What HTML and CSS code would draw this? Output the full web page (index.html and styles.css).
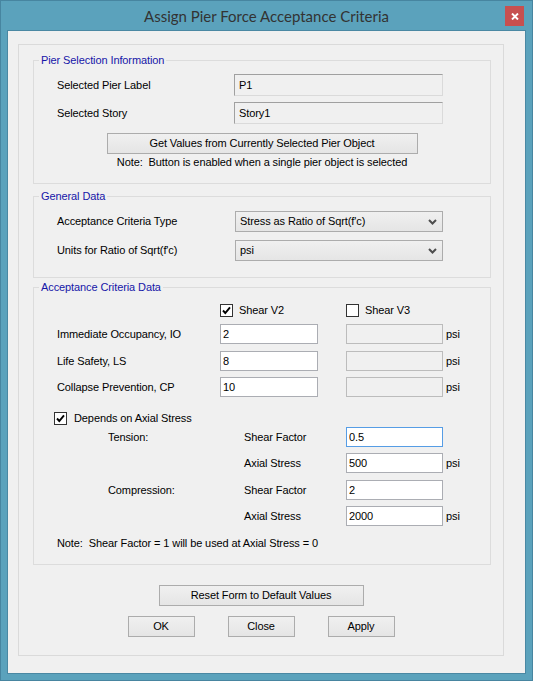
FILE: index.html
```html
<!DOCTYPE html>
<html>
<head>
<meta charset="utf-8">
<title>Assign Pier Force Acceptance Criteria</title>
<link rel="stylesheet" href="styles.css">
</head>
<body>
<div class="window">
  <div class="titlebar">
    <span class="tb-spacer"></span>
    <div class="title">Assign Pier Force Acceptance Criteria</div>
    <div class="close-wrap">
      <div class="close">
        <svg width="8" height="7" viewBox="0 0 8 7"><path d="M1 0.5 L7 6.5 M7 0.5 L1 6.5" stroke="#fff" stroke-width="1.9" fill="none"/></svg>
      </div>
    </div>
  </div>
  <div class="client">
    <div class="panel">

      <div class="group g1">
        <span class="caption">Pier Selection Information</span>
        <div class="row first">
          <span class="label w177">Selected Pier Label</span>
          <input class="tb ro" type="text" value="P1" readonly>
        </div>
        <div class="row second">
          <span class="label w177">Selected Story</span>
          <input class="tb ro" type="text" value="Story1" readonly>
        </div>
        <button class="btn getvals">Get Values from Currently Selected Pier Object</button>
        <div class="note-center">Note:&nbsp; Button is enabled when a single pier object is selected</div>
      </div>

      <div class="group g2">
        <span class="caption">General Data</span>
        <div class="row cb-first">
          <span class="label w178">Acceptance Criteria Type</span>
          <div class="combo"><span>Stress as Ratio of Sqrt(f'c)</span>
            <svg class="chev" width="9" height="6" viewBox="0 0 9 6"><path d="M1 1 L4.5 4.5 L8 1" stroke="#4d4d4d" stroke-width="2" fill="none"/></svg>
          </div>
        </div>
        <div class="row cb-second">
          <span class="label w178">Units for Ratio of Sqrt(f'c)</span>
          <div class="combo"><span>psi</span>
            <svg class="chev" width="9" height="6" viewBox="0 0 9 6"><path d="M1 1 L4.5 4.5 L8 1" stroke="#4d4d4d" stroke-width="2" fill="none"/></svg>
          </div>
        </div>
      </div>

      <div class="group g3">
        <span class="caption">Acceptance Criteria Data</span>
        <div class="shear-row">
          <label class="chk-item v2">
            <span class="chk"><svg width="11" height="11" viewBox="0 0 11 11"><path d="M2 5.5 L4.3 8 L9 2.3" stroke="#000" stroke-width="1.9" fill="none"/></svg></span>
            <span>Shear V2</span>
          </label>
          <label class="chk-item">
            <span class="chk"></span>
            <span>Shear V3</span>
          </label>
        </div>
        <div class="crit-row r-io">
          <span class="label w163">Immediate Occupancy, IO</span>
          <input class="tb w98" type="text" value="2">
          <input class="tb dis w97" type="text" value="" disabled>
          <span class="unit">psi</span>
        </div>
        <div class="crit-row r-ls">
          <span class="label w163">Life Safety, LS</span>
          <input class="tb w98" type="text" value="8">
          <input class="tb dis w97" type="text" value="" disabled>
          <span class="unit">psi</span>
        </div>
        <div class="crit-row r-cp">
          <span class="label w163">Collapse Prevention, CP</span>
          <input class="tb w98" type="text" value="10">
          <input class="tb dis w97" type="text" value="" disabled>
          <span class="unit">psi</span>
        </div>
        <label class="depends-row">
          <span class="chk"><svg width="11" height="11" viewBox="0 0 11 11"><path d="M2 5.5 L4.3 8 L9 2.3" stroke="#000" stroke-width="1.9" fill="none"/></svg></span>
          <span>Depends on Axial Stress</span>
        </label>
        <div class="axial-row ax1">
          <span class="label w136">Tension:</span>
          <span class="label w102">Shear Factor</span>
          <input class="tb w97 focus" type="text" value="0.5">
        </div>
        <div class="axial-row ax2">
          <span class="label w136"></span>
          <span class="label w102">Axial Stress</span>
          <input class="tb w97" type="text" value="500">
          <span class="unit">psi</span>
        </div>
        <div class="axial-row ax3">
          <span class="label w136">Compression:</span>
          <span class="label w102">Shear Factor</span>
          <input class="tb w97" type="text" value="2">
        </div>
        <div class="axial-row ax4">
          <span class="label w136"></span>
          <span class="label w102">Axial Stress</span>
          <input class="tb w97" type="text" value="2000">
          <span class="unit">psi</span>
        </div>
        <div class="note-left">Note:&nbsp; Shear Factor = 1 will be used at Axial Stress = 0</div>
      </div>

      <button class="btn reset">Reset Form to Default Values</button>
      <div class="action-row">
        <button class="btn act">OK</button>
        <button class="btn act">Close</button>
        <button class="btn act">Apply</button>
      </div>

    </div>
  </div>
</div>
</body>
</html>
```

FILE: styles.css
```css
html, body {
  margin: 0;
  padding: 0;
  background: #5ba2bc;
}

body {
  font-family: "Liberation Sans", Arial, sans-serif;
  font-size: 11px;
  line-height: 13px;
  letter-spacing: -0.1px;
  color: #000;
}

.window {
  width: 533px;
  height: 681px;
  box-sizing: border-box;
  border: 1px solid #4785a0;
  background: #5ba2bc;
}

.titlebar {
  height: 29px;
  display: grid;
  grid-template-columns: 1fr auto 1fr;
  align-items: center;
}

.title {
  font-family: "Lato", "Liberation Sans", sans-serif;
  font-size: 15px;
  line-height: 20px;
  letter-spacing: 0;
  color: #333333;
  white-space: nowrap;
}

.close-wrap {
  display: flex;
  justify-content: flex-end;
  align-self: start;
}

.close {
  width: 19px;
  height: 20px;
  margin-top: 5px;
  margin-right: 8px;
  background: #c75050;
  display: flex;
  align-items: center;
  justify-content: center;
}

.close svg {
  display: block;
}

.client {
  margin: 0 6px;
  height: 642px;
  border: 1px solid #4a88a3;
  background: #f0f0f0;
  overflow: hidden;
}

.panel {
  box-sizing: border-box;
  width: 486px;
  height: 612px;
  margin: 13px 0 0 10px;
  border: 1px solid #dadada;
  display: flex;
  flex-direction: column;
}

.group {
  position: relative;
  box-sizing: border-box;
  width: 458px;
  margin-left: 14px;
  border: 1px solid #dcdcdc;
  display: flex;
  flex-direction: column;
}

.caption {
  position: absolute;
  left: 5px;
  top: -7px;
  padding: 0 2px;
  background: #f0f0f0;
  color: #1616a8;
  line-height: 13px;
  white-space: nowrap;
}

.g1 { margin-top: 15px; height: 124px; }
.g2 { margin-top: 12px; height: 82px; }
.g3 { margin-top: 9px; height: 278px; }

.row {
  display: flex;
  align-items: center;
  padding-left: 23px;
}

.row.first { margin-top: 13px; }
.row.second { margin-top: 6px; }
.row.cb-first { margin-top: 14px; }
.row.cb-second { margin-top: 8px; }

.label { white-space: nowrap; flex: none; }
.w177 { width: 177px; }
.w178 { width: 178px; }
.w163 { width: 163px; }
.w136 { width: 136px; }
.w102 { width: 102px; }

.tb {
  box-sizing: border-box;
  font: inherit;
  letter-spacing: inherit;
  color: #000;
  margin: 0;
  height: 20px;
  border: 1px solid #abadb3;
  background: #fff;
  padding: 0 0 0 2px;
  outline: none;
  flex: none;
}

.tb.ro {
  width: 209px;
  height: 22px;
  padding-left: 4px;
  background: #f0f0f0;
  border-color: #a0a0a0 #dadada #dadada #a0a0a0;
}

.tb.dis {
  background: #f0f0f0;
  border-color: #bcbcbc;
  margin-left: 28px;
}

.tb.focus {
  border-color: #569de5;
}

.w98 { width: 98px; }
.w97 { width: 97px; }

.unit {
  margin-left: 3px;
}

.combo {
  box-sizing: border-box;
  width: 208px;
  height: 21px;
  border: 1px solid #acacac;
  background: linear-gradient(#f0f0f0, #e5e5e5);
  display: flex;
  align-items: center;
  justify-content: space-between;
  padding: 0 5px 0 4px;
}

.chev {
  display: block;
}

.btn {
  box-sizing: border-box;
  font: inherit;
  letter-spacing: inherit;
  color: #000;
  margin: 0;
  padding: 0;
  height: 21px;
  border: 1px solid #acacac;
  background: linear-gradient(#f0f0f0, #e5e5e5);
}

.getvals {
  width: 311px;
  margin: 9px auto 0;
}

.note-center {
  margin-top: 2px;
  text-align: center;
  white-space: nowrap;
}

.shear-row {
  display: flex;
  align-items: center;
  margin-top: 16px;
  padding-left: 186px;
  height: 13px;
}

.chk-item {
  display: flex;
  align-items: center;
  gap: 6px;
}

.chk-item.v2 {
  width: 126px;
}

.chk {
  box-sizing: border-box;
  width: 13px;
  height: 13px;
  border: 1px solid #333;
  background: #fff;
  display: flex;
  align-items: center;
  justify-content: center;
  flex: none;
}

.chk svg { display: block; }

.crit-row {
  display: flex;
  align-items: center;
  padding-left: 23px;
  height: 20px;
}

.r-io { margin-top: 7px; }
.r-ls { margin-top: 7px; }
.r-cp { margin-top: 6px; }

.depends-row {
  display: flex;
  align-items: center;
  gap: 7px;
  margin-top: 15px;
  padding-left: 20px;
  height: 13px;
}

.axial-row {
  display: flex;
  align-items: center;
  padding-left: 74px;
  height: 20px;
}

.ax1 { margin-top: 2px; }
.ax2 { margin-top: 6px; }
.ax3 { margin-top: 7px; }
.ax4 { margin-top: 6px; }

.note-left {
  margin-top: 11px;
  padding-left: 23px;
  white-space: nowrap;
}

.reset {
  width: 205px;
  margin: 20px auto 0;
}

.action-row {
  display: flex;
  justify-content: center;
  gap: 33px;
  margin-top: 10px;
}

.act {
  width: 67px;
}
```
